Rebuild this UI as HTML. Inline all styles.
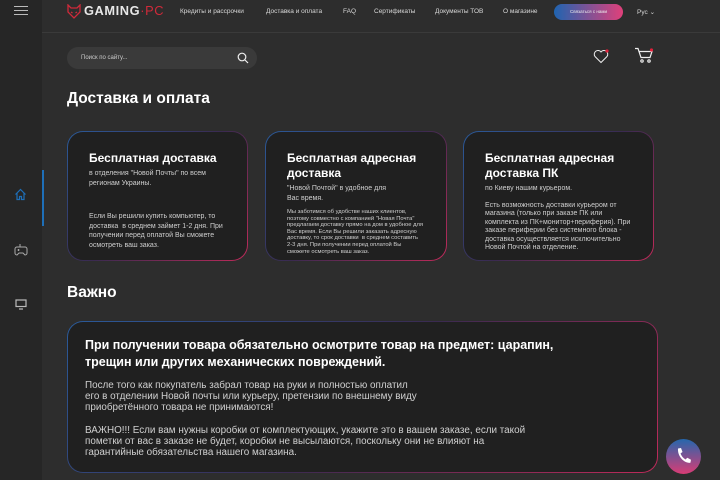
<!DOCTYPE html>
<html><head><meta charset="utf-8"><style>
*{margin:0;padding:0;box-sizing:border-box}
body{width:720px;height:480px;overflow:hidden;background:#2d2d2d;font-family:"Liberation Sans","DejaVu Sans",sans-serif;color:#fff;position:relative}
.side{position:absolute;left:0;top:0;width:42px;height:480px;background:#262626}
.side .bar{position:absolute;left:42px;top:170px;width:2px;height:56px;background:#1e6fb8}
.hdr{position:absolute;left:42px;top:0;right:0;height:33px;border-bottom:1px solid #3a3a3a}
.nav{position:absolute;top:8px;font-size:6.5px;color:#d8d8d8;white-space:nowrap}
.btn{position:absolute;left:554px;top:4px;width:69px;height:16px;border-radius:8px;background:linear-gradient(90deg,#1f64b0,#e0407a);font-size:4.5px;color:#eee;text-align:center;line-height:16px}
.search{position:absolute;left:67px;top:47px;width:190px;height:22px;border-radius:11px;background:#3a3a3a;font-size:6px;color:#ccc;padding-left:14px;line-height:22px}
h1{position:absolute;left:67px;font-size:15.5px;font-weight:bold;color:#fff}
.card{position:absolute;border-radius:16px;padding:1px;background:linear-gradient(135deg,#2a5a9a,#3a2a50 50%,#c02a5a)}
.card .in{width:100%;height:100%;border-radius:15px;background:#202020;padding:19px 21px 0 21px}
.card h2{font-size:12px;font-weight:bold;line-height:15px;margin-bottom:3px}
.card p{font-size:7px;line-height:9.5px;color:#cfcfcf}
.big h2{font-size:12.5px;line-height:17px}
.big p{font-size:9.9px;line-height:11.2px;color:#d0d0d0}
</style></head><body>
<div class="side">
 <div style="position:absolute;left:14px;top:6px;width:14px;height:1px;background:#bbb;box-shadow:0 4px 0 #bbb,0 8px 0 #bbb"></div>
 <div class="bar"></div>
 <svg style="position:absolute;left:14px;top:188px" width="13" height="13" viewBox="0 0 13 13" fill="none" stroke="#1e6fb8" stroke-width="1.2"><path d="M1.5 6.5L6.5 1.5 11.5 6.5M3 5v6.5h2.5V8.5h2v3H10V5"/></svg>
 <svg style="position:absolute;left:14px;top:243px" width="14" height="14" viewBox="0 0 14 14" fill="none" stroke="#aaa" stroke-width="1"><path d="M6 1v3M3 4h8a2 2 0 0 1 2 2v4a2 2 0 0 1-2 2l-2-2H5l-2 2a2 2 0 0 1-2-2V6a2 2 0 0 1 2-2z"/><path d="M3.5 7h2M4.5 6v2"/></svg>
 <svg style="position:absolute;left:15px;top:299px" width="12" height="11" viewBox="0 0 12 11" fill="none" stroke="#bbb" stroke-width="1.2"><rect x="1" y="1" width="10" height="6.5"/><path d="M4 10h4"/></svg>
</div>
<div class="hdr"></div>
<svg style="position:absolute;left:66px;top:4px" width="16" height="15" viewBox="0 0 16 15" fill="none" stroke="#d02a3a" stroke-width="1.3"><path d="M2 1l3 3h6l3-3v7l-6 6-6-6z"/><path d="M5 8l1.5 1M11 8l-1.5 1"/></svg>
<div style="position:absolute;left:84px;top:3px;font-size:12.8px;font-weight:bold;letter-spacing:.6px;color:#e8e8e8">GAMING<span style="color:#d02a3a;font-weight:normal">·PC</span></div>
<div class="nav" style="left:180px">Кредиты и рассрочки</div>
<div class="nav" style="left:266px">Доставка и оплата</div>
<div class="nav" style="left:343px">FAQ</div>
<div class="nav" style="left:374px">Сертификаты</div>
<div class="nav" style="left:435px">Документы ТОВ</div>
<div class="nav" style="left:503px">О магазине</div>
<div class="btn">Связаться с нами</div>
<div class="nav" style="left:637px">Рус ⌄</div>
<div class="search">Поиск по сайту...</div>
<svg style="position:absolute;left:237px;top:52px" width="12" height="12" viewBox="0 0 12 12" fill="none" stroke="#eee" stroke-width="1.2"><circle cx="5" cy="5" r="3.8"/><path d="M8 8l3 3"/></svg>
<svg style="position:absolute;left:593px;top:48px" width="17" height="16" viewBox="0 0 17 16" fill="none" stroke="#eee" stroke-width="1"><path d="M8 14.5L2 8.5A3.3 3.3 0 0 1 8 4a3.3 3.3 0 0 1 6 4.5z"/><circle cx="14" cy="3" r="1.6" fill="#e0203a" stroke="none"/></svg>
<svg style="position:absolute;left:634px;top:47px" width="20" height="17" viewBox="0 0 20 17" fill="none" stroke="#eee" stroke-width="1.2"><path d="M1 1.5h3l3 9h9l2-6H5.5"/><circle cx="8" cy="14" r="1.2"/><circle cx="15" cy="14" r="1.2"/><circle cx="17.5" cy="3" r="1.6" fill="#e0203a" stroke="none"/></svg>
<h1 style="top:90px">Доставка и оплата</h1>
<div class="card" style="left:67px;top:131px;width:181px;height:130px"><div class="in">
<h2>Бесплатная доставка</h2>
<p>в отделения "Новой Почты" по всем<br>регионам Украины.</p>
<p style="margin-top:24px">Если Вы решили купить компьютер, то<br>доставка &nbsp;в среднем займет 1-2 дня. При<br>получении перед оплатой Вы сможете<br>осмотреть ваш заказ.</p>
</div></div>
<div class="card" style="left:265px;top:131px;width:182px;height:130px"><div class="in">
<h2>Бесплатная адресная<br>доставка</h2>
<p>"Новой Почтой" в удобное для<br>Вас время.</p>
<p style="font-size:5.8px;line-height:6.6px;margin-top:6px">Мы заботимся об удобстве наших клиентов,<br>поэтому совместно с компанией "Новая Почта"<br>предлагаем доставку прямо на дом в удобное для<br>Вас время. Если Вы решили заказать адресную<br>доставку, то срок доставки &nbsp;в среднем составить<br>2-3 дня. При получении перед оплатой Вы<br>сможете осмотреть ваш заказ.</p>
</div></div>
<div class="card" style="left:463px;top:131px;width:191px;height:130px"><div class="in">
<h2>Бесплатная адресная<br>доставка ПК</h2>
<p>по Киеву нашим курьером.</p>
<p style="margin-top:8px;line-height:8.5px">Есть возможность доставки курьером от<br>магазина (только при заказе ПК или<br>комплекта из ПК+монитор+периферия). При<br>заказе периферии без системного блока -<br>доставка осуществляется исключительно<br>Новой Почтой на отделение.</p>
</div></div>
<h1 style="top:284px">Важно</h1>
<div class="card big" style="left:67px;top:321px;width:591px;height:152px"><div class="in" style="padding:15px 17px 0 17px">
<h2>При получении товара обязательно осмотрите товар на предмет: царапин,<br>трещин или других механических повреждений.</h2>
<p style="margin-top:9px">После того как покупатель забрал товар на руки и полностью оплатил<br>его в отделении Новой почты или курьеру, претензии по внешнему виду<br>приобретённого товара не принимаются!</p>
<p style="margin-top:11px">ВАЖНО!!! Если вам нужны коробки от комплектующих, укажите это в вашем заказе, если такой<br>пометки от вас в заказе не будет, коробки не высылаются, поскольку они не влияют на<br>гарантийные обязательства нашего магазина.</p>
</div></div>
<div style="position:absolute;left:666px;top:439px;width:35px;height:35px;border-radius:50%;background:linear-gradient(180deg,#2567ad,#d93c75)"></div>
<svg style="position:absolute;left:675px;top:447px" width="17" height="19" viewBox="0 0 17 19"><path d="M3 1.5l3 -0.5 1.5 4-2 1.5c1 2.5 2.5 4.5 5 6l1.8-1.7 3.7 2-0.6 3c-7 0.5-13-7-12.4-14.3z" fill="#fff"/></svg>
</body></html>
